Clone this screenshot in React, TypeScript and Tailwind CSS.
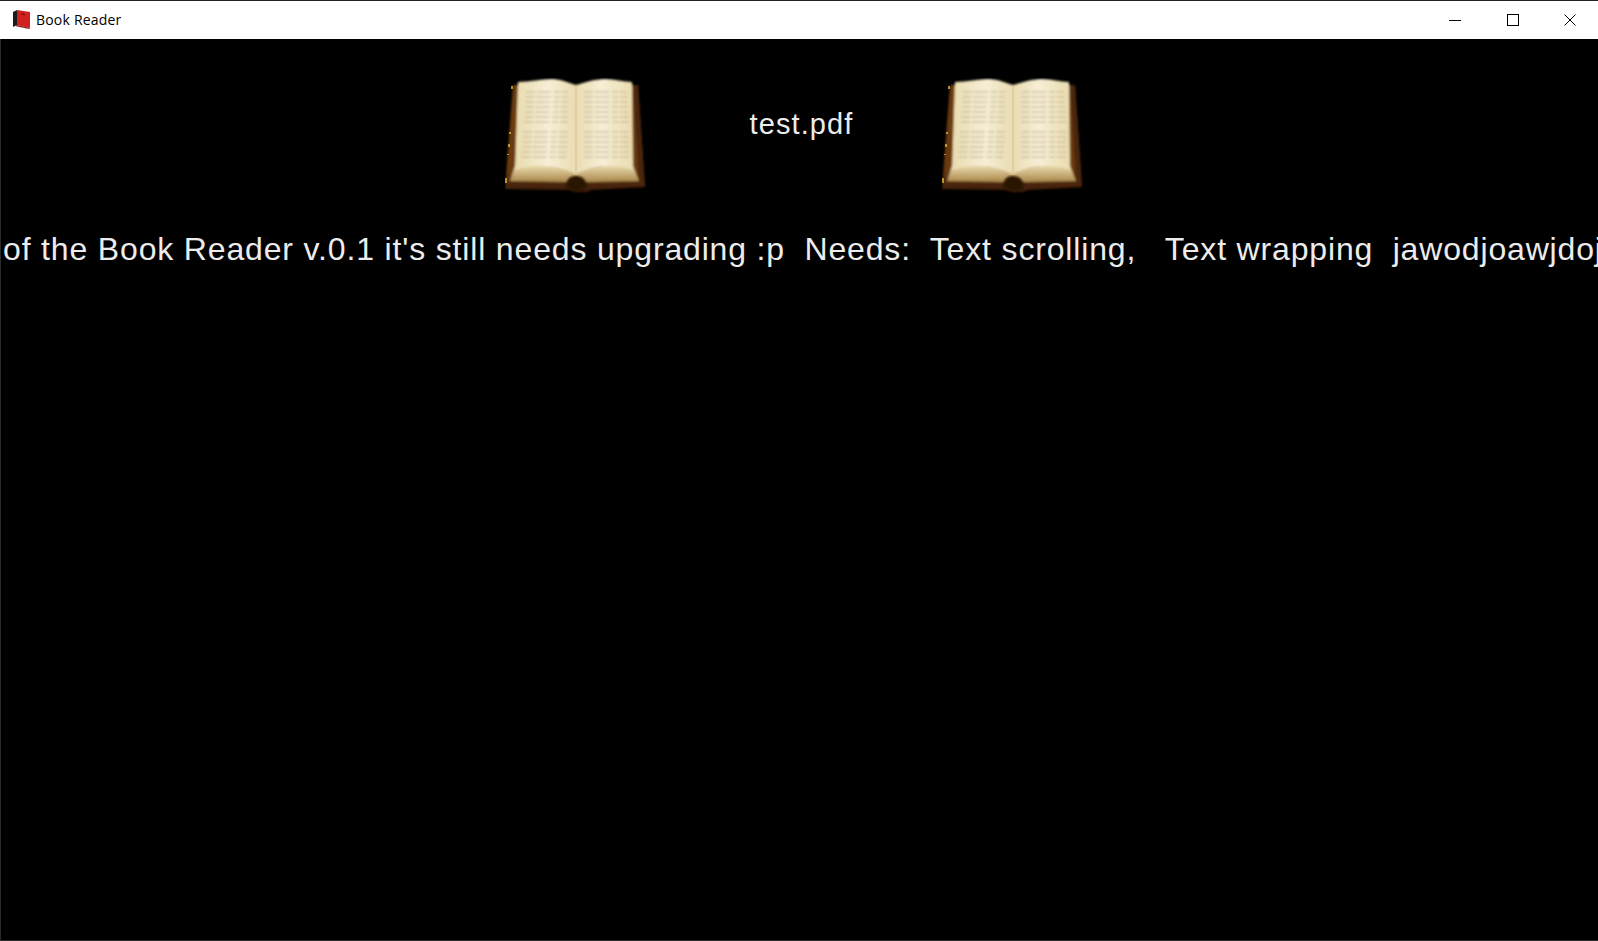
const pageLines = [0, 1, 2, 3, 4, 5, 6, 8, 9, 10, 11, 12, 13]

function BookIcon({ id }: { id: string }) {
  return (
    <svg width="141" height="116" viewBox="0 0 141 116" className="shrink-0">
      <defs>
        <linearGradient id={`${id}-cover`} x1="0" y1="0" x2="0" y2="1">
          <stop offset="0" stopColor="#6a3a10" />
          <stop offset="0.8" stopColor="#6a3a10" />
          <stop offset="1" stopColor="#3a1b06" />
        </linearGradient>
        <linearGradient id={`${id}-left`} x1="0" y1="0" x2="1" y2="0">
          <stop offset="0" stopColor="#eadcae" />
          <stop offset="0.55" stopColor="#f6eed6" />
          <stop offset="1" stopColor="#eadcb0" />
        </linearGradient>
        <linearGradient id={`${id}-right`} x1="0" y1="0" x2="1" y2="0">
          <stop offset="0" stopColor="#eadcb0" />
          <stop offset="0.45" stopColor="#f6eed6" />
          <stop offset="1" stopColor="#eadcae" />
        </linearGradient>
        <linearGradient id={`${id}-edge`} x1="0" y1="0" x2="0" y2="1">
          <stop offset="0" stopColor="#f0e2b6" />
          <stop offset="1" stopColor="#a8864a" />
        </linearGradient>
        <filter id={`${id}-soft`} x="-5%" y="-5%" width="110%" height="110%">
          <feGaussianBlur stdDeviation="1" />
        </filter>
        <filter id={`${id}-text`} x="-5%" y="-5%" width="110%" height="110%">
          <feGaussianBlur stdDeviation="1.3" />
        </filter>
      </defs>
      <g filter={`url(#${id}-soft)`}>
        <path d="M8 7 L133 7 L140 109 L86 112 C84 115 68 115 64 112 L0 111 Z" fill={`url(#${id}-cover)`} />
        <path d="M128 7 L133 7 L140 109 L134 104 Z" fill="#4a2508" />
        <path d="M10 88 C30 84 55 88 72 95 C90 88 112 84 128 88 L134 103 L84 104 L64 104 L5 103 Z" fill={`url(#${id}-edge)`} />
        <path d="M13 4 C25 4 36 1 47 1 C55 1 64 5 71 7 L71 96 C55 88 30 84 10 92 Z" fill={`url(#${id}-left)`} />
        <path d="M71 7 C78 5 90 1 100 1 C110 1 118 4 127 4 L128 92 C110 84 88 88 71 96 Z" fill={`url(#${id}-right)`} />
      </g>
      <path d="M71 8 L71 95" stroke="#d4c291" strokeWidth="1.5" opacity="0.7" />
      <g filter={`url(#${id}-text)`} stroke="#a89a7c" strokeWidth="1.5" strokeDasharray="9 2 14 3 6 2" opacity="0.45">
        {pageLines.map((n) => (
          <g key={n}>
            <path d={`M${21 - n * 0.35} ${14 + n * 5} L${63} ${14 + n * 5}`} />
            <path d={`M${79} ${14 + n * 5} L${122 + n * 0.35} ${14 + n * 5}`} />
          </g>
        ))}
      </g>
      <path d="M61 108 C62 100 66 98 71 98 C76 98 80 100 82 108 C78 115 66 115 61 108 Z" fill="#2a1206" filter={`url(#${id}-soft)`} />
      <path d="M1 100 L1 105 M3 76 L3 77 M4 66 L4 69 M5 54 L5 56 M7 8 L7 11" stroke="#e8b93a" strokeWidth="1.5" />
    </svg>
  )
}

export default function App() {
  return (
    <div className="h-[941px] w-[1598px] overflow-hidden bg-black flex flex-col font-['Liberation_Sans',sans-serif]">
      {/* Title bar */}
      <div className="h-[39px] shrink-0 bg-white border-t border-[#222] flex items-center pl-3 font-['Open_Sans',sans-serif] text-[14px] text-black">
        <svg width="19" height="20" viewBox="0 0 19 20" className="mr-[5px] mb-[2px] shrink-0">
          <path d="M1 3 L5 1 L5 16 L1 18 Z" fill="#1c1c1c" />
          <path d="M5 1 L18 3 L18 19 L5 16 Z" fill="#d0211f" />
          <path d="M5 16 L18 19 L17 20 L3 17 Z" fill="#8c1512" />
          <path d="M9 5 L12 5 L12 7" stroke="#7c100e" strokeWidth="1" fill="none" />
        </svg>
        <span className="tracking-[0.2px] mb-[2px]">Book Reader</span>
        <div className="ml-auto flex items-center h-full">
          <button className="w-[58px] h-full flex items-center justify-center">
            <svg width="12" height="12" viewBox="0 0 12 12">
              <path d="M0 6.5 H12" stroke="#000" strokeWidth="1" />
            </svg>
          </button>
          <button className="w-[58px] h-full flex items-center justify-center">
            <svg width="12" height="12" viewBox="0 0 12 12">
              <rect x="0.5" y="0.5" width="11" height="11" fill="none" stroke="#000" strokeWidth="1" />
            </svg>
          </button>
          <button className="w-[56px] h-full flex items-center justify-center">
            <svg width="12" height="12" viewBox="0 0 12 12">
              <path d="M0.5 0.5 L11.5 11.5 M11.5 0.5 L0.5 11.5" stroke="#000" strokeWidth="1" />
            </svg>
          </button>
        </div>
      </div>

      {/* Reader */}
      <div className="flex-1 border-l border-[#2a2a2a] border-b text-[#ececec]">
        <div className="flex items-start pl-[504px] pt-[39px]">
          <BookIcon id="book-a" />
          <div className="w-[296px] pt-[28px] pl-[15px] text-center text-[29px] leading-[36px] tracking-[1.1px]">test.pdf</div>
          <BookIcon id="book-b" />
        </div>
        <p className="mt-[35px] pl-[2px] whitespace-pre overflow-hidden text-[32px] leading-[40px] tracking-[0.84px]">
          {"of the Book Reader v.0.1 it's still needs upgrading :p  Needs:  Text scrolling,   Text wrapping  jawodjoawjdojawodjoawjd"}
        </p>
      </div>
    </div>
  )
}
